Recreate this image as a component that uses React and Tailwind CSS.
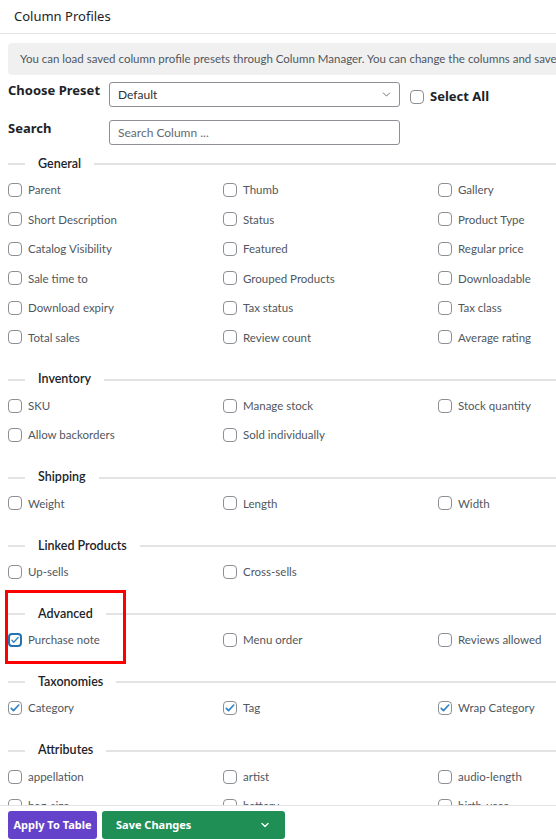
import { ChevronDown } from "lucide-react";

const sections = [
  {
    title: "General",
    items: [
      "Parent", "Thumb", "Gallery",
      "Short Description", "Status", "Product Type",
      "Catalog Visibility", "Featured", "Regular price",
      "Sale time to", "Grouped Products", "Downloadable",
      "Download expiry", "Tax status", "Tax class",
      "Total sales", "Review count", "Average rating",
    ],
  },
  {
    title: "Inventory",
    items: ["SKU", "Manage stock", "Stock quantity", "Allow backorders", "Sold individually"],
  },
  { title: "Shipping", items: ["Weight", "Length", "Width"] },
  { title: "Linked Products", items: ["Up-sells", "Cross-sells"] },
  {
    title: "Advanced",
    items: ["Purchase note", "Menu order", "Reviews allowed"],
    checked: ["Purchase note"],
    focused: "Purchase note",
  },
  {
    title: "Taxonomies",
    items: ["Category", "Tag", "Wrap Category"],
    checked: ["Category", "Tag", "Wrap Category"],
  },
  {
    title: "Attributes",
    items: ["appellation", "artist", "audio-length", "bag-size", "battery", "birth-year"],
  },
];

const lato = { fontFamily: 'Lato, "Noto Sans", sans-serif' };

function Checkbox({ checked, focused }) {
  return (
    <span
      className={`w-[14px] h-[14px] shrink-0 rounded-[4px] bg-white flex items-center justify-center ${
        focused ? "border-2 border-[#2271b1]" : "border border-[#8c8f94]"
      }`}
    >
      {checked && (
        <svg viewBox="0 0 16 16" className="w-[12px] h-[12px]">
          <path d="M3 8.5l3 3 7-7.5" fill="none" stroke="#3582c4" strokeWidth="2.2" strokeLinecap="round" strokeLinejoin="round" />
        </svg>
      )}
    </span>
  );
}

function Section({ title, items, checked = [], focused }) {
  return (
    <div className="mb-[16.8px]">
      <div className="flex items-center h-[22px]">
        <div className="w-[17px] h-[2px] bg-[#e3e3e3]" />
        <span className="px-[13px] text-[12.5px] font-semibold text-[#1d2327]" style={lato}>
          {title}
        </span>
        <div className="flex-1 h-[2px] bg-[#e3e3e3]" />
      </div>
      <div className="grid grid-cols-[215px_215px_1fr]">
        {items.map((item) => (
          <label
            key={item}
            className="h-[29.5px] flex items-center gap-[6px] text-[11.5px] leading-none text-[#50575e]"
            style={lato}
          >
            <Checkbox checked={checked.includes(item)} focused={focused === item} />
            <span>{item}</span>
          </label>
        ))}
      </div>
    </div>
  );
}

export default function App() {
  return (
    <div
      className="w-[556px] h-[839px] bg-white flex flex-col overflow-hidden relative"
      style={{ fontFamily: '"Noto Sans", "Open Sans", sans-serif' }}
    >
      <div className="flex-1 overflow-hidden">
        {/* Header */}
        <div className="h-[34px] border-b border-[#e4e4e4] flex items-center px-[14px] text-[13px] text-[#1d2327]">
          Column Profiles
        </div>

        {/* Notice */}
        <div
          className="mt-[9px] ml-2 w-[760px] h-[32px] rounded-[4px] bg-[#f0f0f1] flex items-center pl-3 text-[11.5px] text-[#50575e] whitespace-nowrap"
          style={lato}
        >
          You can load saved column profile presets through Column Manager. You can change the columns and save your changes too.
        </div>

        {/* Preset */}
        <div className="mt-[7px] pl-2 flex items-start">
          <div className="w-[101px] -mt-[1px] text-[13px] font-bold text-[#1d2327]">Choose Preset</div>
          <div
            className="w-[291px] h-[25px] border border-[#8c8f94] rounded-[3px] flex items-center justify-between pl-2 pr-[6px] text-[12px] text-[#2c3338]"
            style={lato}
          >
            <span>Default</span>
            <ChevronDown size={13} strokeWidth={1.5} className="text-[#50575e]" />
          </div>
          <div className="ml-[10px] h-[25px] flex items-center gap-[6px] mt-[2px]">
            <Checkbox />
            <span className="text-[13px] font-bold text-[#1d2327]">Select All</span>
          </div>
        </div>

        {/* Search */}
        <div className="mt-[11px] pl-2 flex items-start">
          <div className="w-[101px] -mt-[1px] text-[13px] font-bold text-[#1d2327]">Search</div>
          <div
            className="w-[291px] h-[25px] border border-[#8c8f94] rounded-[3px] flex items-center pl-2 text-[12px] text-[#646970]"
            style={lato}
          >
            Search Column ...
          </div>
        </div>

        {/* Sections */}
        <div className="mt-[8px] pl-2">
          {sections.map((s) => (
            <Section key={s.title} {...s} />
          ))}
        </div>
      </div>

      {/* Footer */}
      <div className="h-[34px] shrink-0 border-t border-[#e4e4e4] bg-white flex items-start gap-[5px] pl-2 pt-[5px]">
        <button className="w-[89px] h-[28px] rounded-[3px] bg-[#6442ca] text-white text-[11px] font-bold">
          Apply To Table
        </button>
        <button className="w-[183px] h-[28px] rounded-[3px] bg-[#1f8f56] text-white text-[11px] font-bold flex items-center justify-between pl-[14px] pr-[14px]">
          <span>Save Changes</span>
          <ChevronDown size={12} strokeWidth={2.5} />
        </button>
      </div>

      {/* Annotation highlight */}
      <div className="absolute left-[5px] top-[590px] w-[121px] h-[74px] border-[3px] border-[#ff0000] pointer-events-none" />
    </div>
  );
}
